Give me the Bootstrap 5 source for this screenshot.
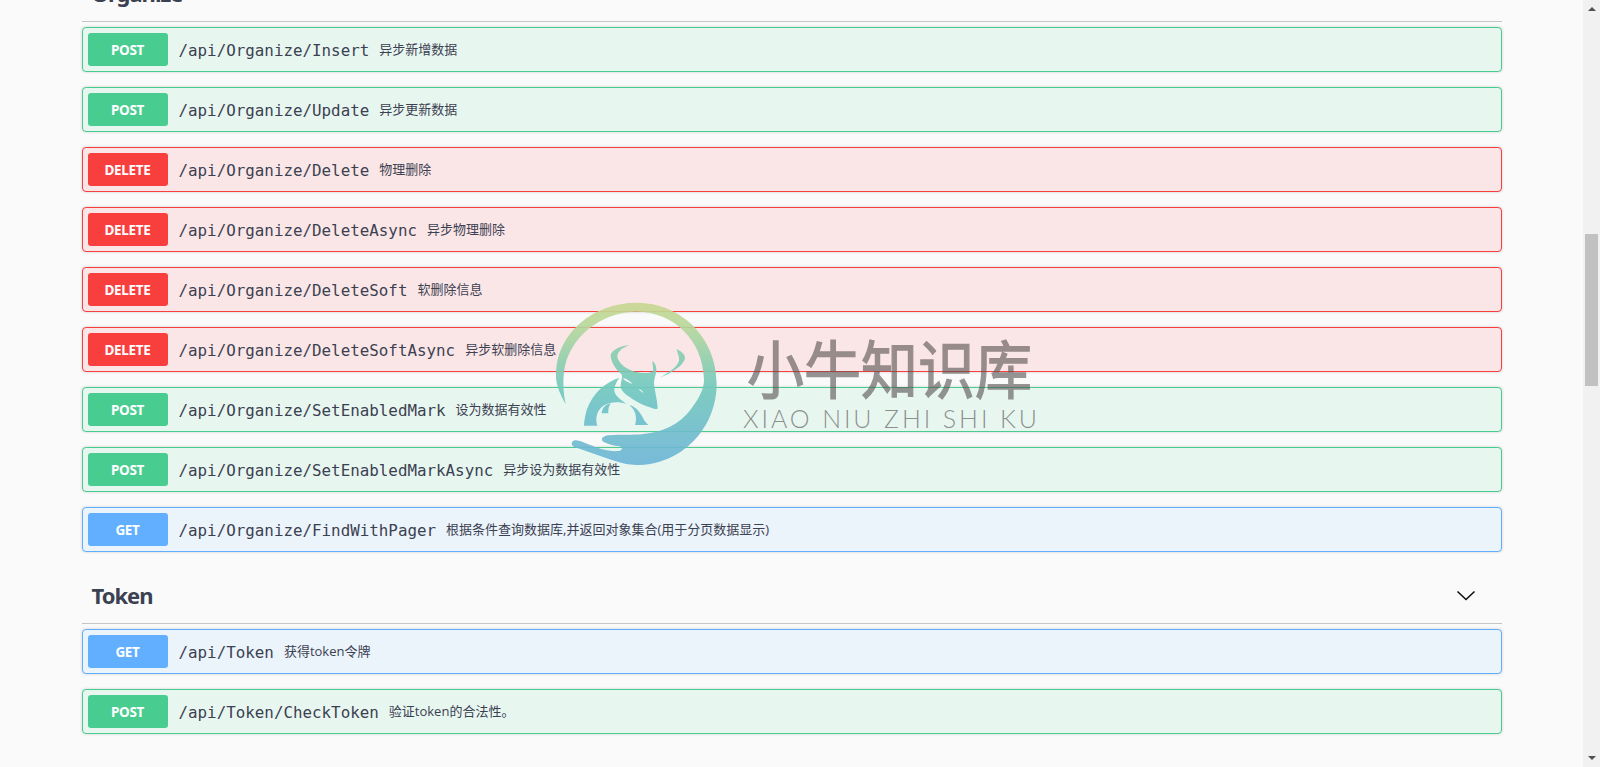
<!DOCTYPE html>
<html lang="zh">
<head>
<meta charset="utf-8">
<title>Swagger</title>
<link href="https://cdn.jsdelivr.net/npm/bootstrap@5.3.0/dist/css/bootstrap.min.css" rel="stylesheet">
<style>
html,body{height:767px;overflow:hidden;margin:0}
body{background:#fafafa;color:#3b4151;font-family:"Open Sans","Noto Sans CJK SC",sans-serif}
.pg-main{width:1583px;height:767px;overflow:hidden;position:relative}
.pg-wrap{max-width:1460px;margin:-35px auto 0;padding:0 20px}
.tag-head{height:57px;border-bottom:1px solid #c6c6c6;padding:1px 26px 0 10px;margin-bottom:5px}
.tag-head h4{font-family:"Noto Sans",sans-serif;font-size:22px;font-weight:700;color:#3b4151;margin:0;letter-spacing:-1px}
.op{height:45px;border:1px solid;border-radius:4px;padding:5px;margin-bottom:15px;box-shadow:0 0 3px rgba(0,0,0,.19)}
.op-post{background:#e8f6f0;border-color:#49cc90}
.op-delete{background:#fbe6e7;border-color:#f93e3e}
.op-get{background:#ebf3fb;border-color:#61affe}
.op-m{width:80px;height:33px;border-radius:3px;color:#fff;font-family:"Noto Sans",sans-serif;font-size:13.5px;font-weight:700;letter-spacing:-.3px;padding-top:1px}
.op-post .op-m{background:#49cc90}
.op-delete .op-m{background:#f93e3e}
.op-get .op-m{background:#61affe}
.op-path{font-family:"DejaVu Sans Mono",monospace;font-size:15.85px;color:#3b4151;padding:2px 10px 0 11px;white-space:nowrap}
.op-desc{font-size:13px;color:#3b4151;white-space:nowrap;padding-top:1px}
.sb-rail{width:17px;height:767px;background:#f1f1f1}
.sb-thumb{width:13px;height:152px;background:#c1c1c1;margin:223px 0 0 2px}
.sb-up,.sb-down{width:0;height:0;border-left:4px solid transparent;border-right:4px solid transparent;margin-left:4.5px}
.sb-up{border-bottom:4px solid #505050;margin-top:7px}
.sb-down{border-top:4px solid #505050;margin-top:auto;margin-bottom:7px}
.wm{position:absolute;left:540px;top:290px;width:520px;height:190px;pointer-events:none}
.wm-cn{position:absolute;left:207px;top:48px;font-family:"Noto Sans CJK SC",sans-serif;font-size:57px;line-height:1;color:#55504f;-webkit-text-stroke:1.2px #55504f;opacity:.6;white-space:nowrap;transform:scaleY(1.1);transform-origin:50% 50%}
.wm-en{position:absolute;left:203px;top:113px;font-family:Lato,sans-serif;font-weight:300;font-size:25px;line-height:1.2;letter-spacing:2.9px;color:rgba(85,85,85,.65);white-space:nowrap}
</style>
</head>
<body>
<div class="d-flex">
<div class="pg-main">
<div class="pg-wrap">

<div class="tag-head d-flex align-items-center justify-content-between"><h4>Organize</h4><svg width="20" height="11" viewBox="0 0 20 11"><path d="M1.5 1.5 L10 9.5 L18.5 1.5" fill="none" stroke="#111" stroke-width="1.6"/></svg></div>
<div class="op op-post d-flex align-items-center"><span class="op-m d-flex align-items-center justify-content-center">POST</span><span class="op-path">/api/Organize/Insert</span><span class="op-desc">异步新增数据</span></div>
<div class="op op-post d-flex align-items-center"><span class="op-m d-flex align-items-center justify-content-center">POST</span><span class="op-path">/api/Organize/Update</span><span class="op-desc">异步更新数据</span></div>
<div class="op op-delete d-flex align-items-center"><span class="op-m d-flex align-items-center justify-content-center">DELETE</span><span class="op-path">/api/Organize/Delete</span><span class="op-desc">物理删除</span></div>
<div class="op op-delete d-flex align-items-center"><span class="op-m d-flex align-items-center justify-content-center">DELETE</span><span class="op-path">/api/Organize/DeleteAsync</span><span class="op-desc">异步物理删除</span></div>
<div class="op op-delete d-flex align-items-center"><span class="op-m d-flex align-items-center justify-content-center">DELETE</span><span class="op-path">/api/Organize/DeleteSoft</span><span class="op-desc">软删除信息</span></div>
<div class="op op-delete d-flex align-items-center"><span class="op-m d-flex align-items-center justify-content-center">DELETE</span><span class="op-path">/api/Organize/DeleteSoftAsync</span><span class="op-desc">异步软删除信息</span></div>
<div class="op op-post d-flex align-items-center"><span class="op-m d-flex align-items-center justify-content-center">POST</span><span class="op-path">/api/Organize/SetEnabledMark</span><span class="op-desc">设为数据有效性</span></div>
<div class="op op-post d-flex align-items-center"><span class="op-m d-flex align-items-center justify-content-center">POST</span><span class="op-path">/api/Organize/SetEnabledMarkAsync</span><span class="op-desc">异步设为数据有效性</span></div>
<div class="op op-get d-flex align-items-center"><span class="op-m d-flex align-items-center justify-content-center">GET</span><span class="op-path">/api/Organize/FindWithPager</span><span class="op-desc">根据条件查询数据库,并返回对象集合(用于分页数据显示)</span></div>

<div class="tag-head d-flex align-items-center justify-content-between"><h4>Token</h4><svg width="20" height="11" viewBox="0 0 20 11"><path d="M1.5 1.5 L10 9.5 L18.5 1.5" fill="none" stroke="#111" stroke-width="1.6"/></svg></div>
<div class="op op-get d-flex align-items-center"><span class="op-m d-flex align-items-center justify-content-center">GET</span><span class="op-path">/api/Token</span><span class="op-desc">获得token令牌</span></div>
<div class="op op-post d-flex align-items-center"><span class="op-m d-flex align-items-center justify-content-center">POST</span><span class="op-path">/api/Token/CheckToken</span><span class="op-desc">验证token的合法性。</span></div>

</div>
<div class="wm">
<svg width="190" height="190" viewBox="0 0 570 570">
<defs>
<linearGradient id="wmg" gradientUnits="userSpaceOnUse" x1="0" y1="38" x2="0" y2="525"><stop offset="0" stop-color="#c9d78f"/><stop offset=".15" stop-color="#b5d89b"/><stop offset=".5" stop-color="#74c9ba"/><stop offset="1" stop-color="#6cb4d8"/></linearGradient>
<linearGradient id="wmb" gradientUnits="userSpaceOnUse" x1="0" y1="0" x2="0" y2="260"><stop offset="0" stop-color="#8fd0ac"/><stop offset=".5" stop-color="#72c9bc"/><stop offset="1" stop-color="#6cbdd0"/></linearGradient>
</defs>
<g opacity=".9">
<path fill="url(#wmg)" d="M77 342C55 305 46 275 48 250C50 130 160 38 289 38C425 38 530 145 530 281C530 415 425 525 289 525C245 525 205 505 105 472C94 468 92 456 101 452C108 449 120 453 135 459C170 473 205 486 235 483C248 482 250 472 238 469C220 466 205 463 190 455C180 448 188 438 205 436C240 432 275 436 310 432C365 428 420 405 455 355C480 320 492 295 492 270C490 150 400 65 290 65C180 65 85 145 72 245C68 280 70 310 77 342Z"/>
<g transform="translate(120,150)" fill="url(#wmb)">
<path fill-rule="evenodd" d="M148 15C125 25 112 35 112 50C115 70 140 88 165 95C185 100 205 100 218 95C222 88 216 72 218 62C226 70 230 80 229 92C228 105 222 115 222 130C224 155 232 180 233 203C233 208 228 208 222 206C200 200 175 190 150 172C135 162 120 150 122 135C124 120 128 112 125 103C115 95 95 75 92 48C92 30 120 18 148 15ZM128 115C140 115 150 125 158 132C148 128 135 124 128 115ZM176 146C182 148 188 152 190 158C185 156 180 152 176 146Z"/>
<path d="M118 113C80 125 40 155 20 210C15 230 12 245 12 257L52 257C45 235 50 212 70 197C88 185 118 183 140 192C120 178 100 165 103 145C105 133 112 122 118 113Z"/>
<path d="M92 190C72 194 66 208 65 220L85 220C84 210 86 200 92 190Z"/>
<path d="M148 195C168 200 182 218 192 240C197 248 202 252 206 255L165 255C172 235 168 212 148 195Z"/>
<path d="M290 28C305 33 316 45 315 55C312 75 275 100 240 113C262 98 290 85 297 62C299 50 292 40 290 28Z"/>
</g>
</g>
</svg>
<div class="wm-cn">小牛知识库</div>
<div class="wm-en">XIAO NIU ZHI SHI KU</div>
</div>
</div>
<div class="sb-rail d-flex flex-column"><div class="sb-up"></div><div class="sb-thumb"></div><div class="sb-down"></div></div>
</div>
<script src="https://cdn.jsdelivr.net/npm/bootstrap@5.3.0/dist/js/bootstrap.bundle.min.js"></script>
</body>
</html>
